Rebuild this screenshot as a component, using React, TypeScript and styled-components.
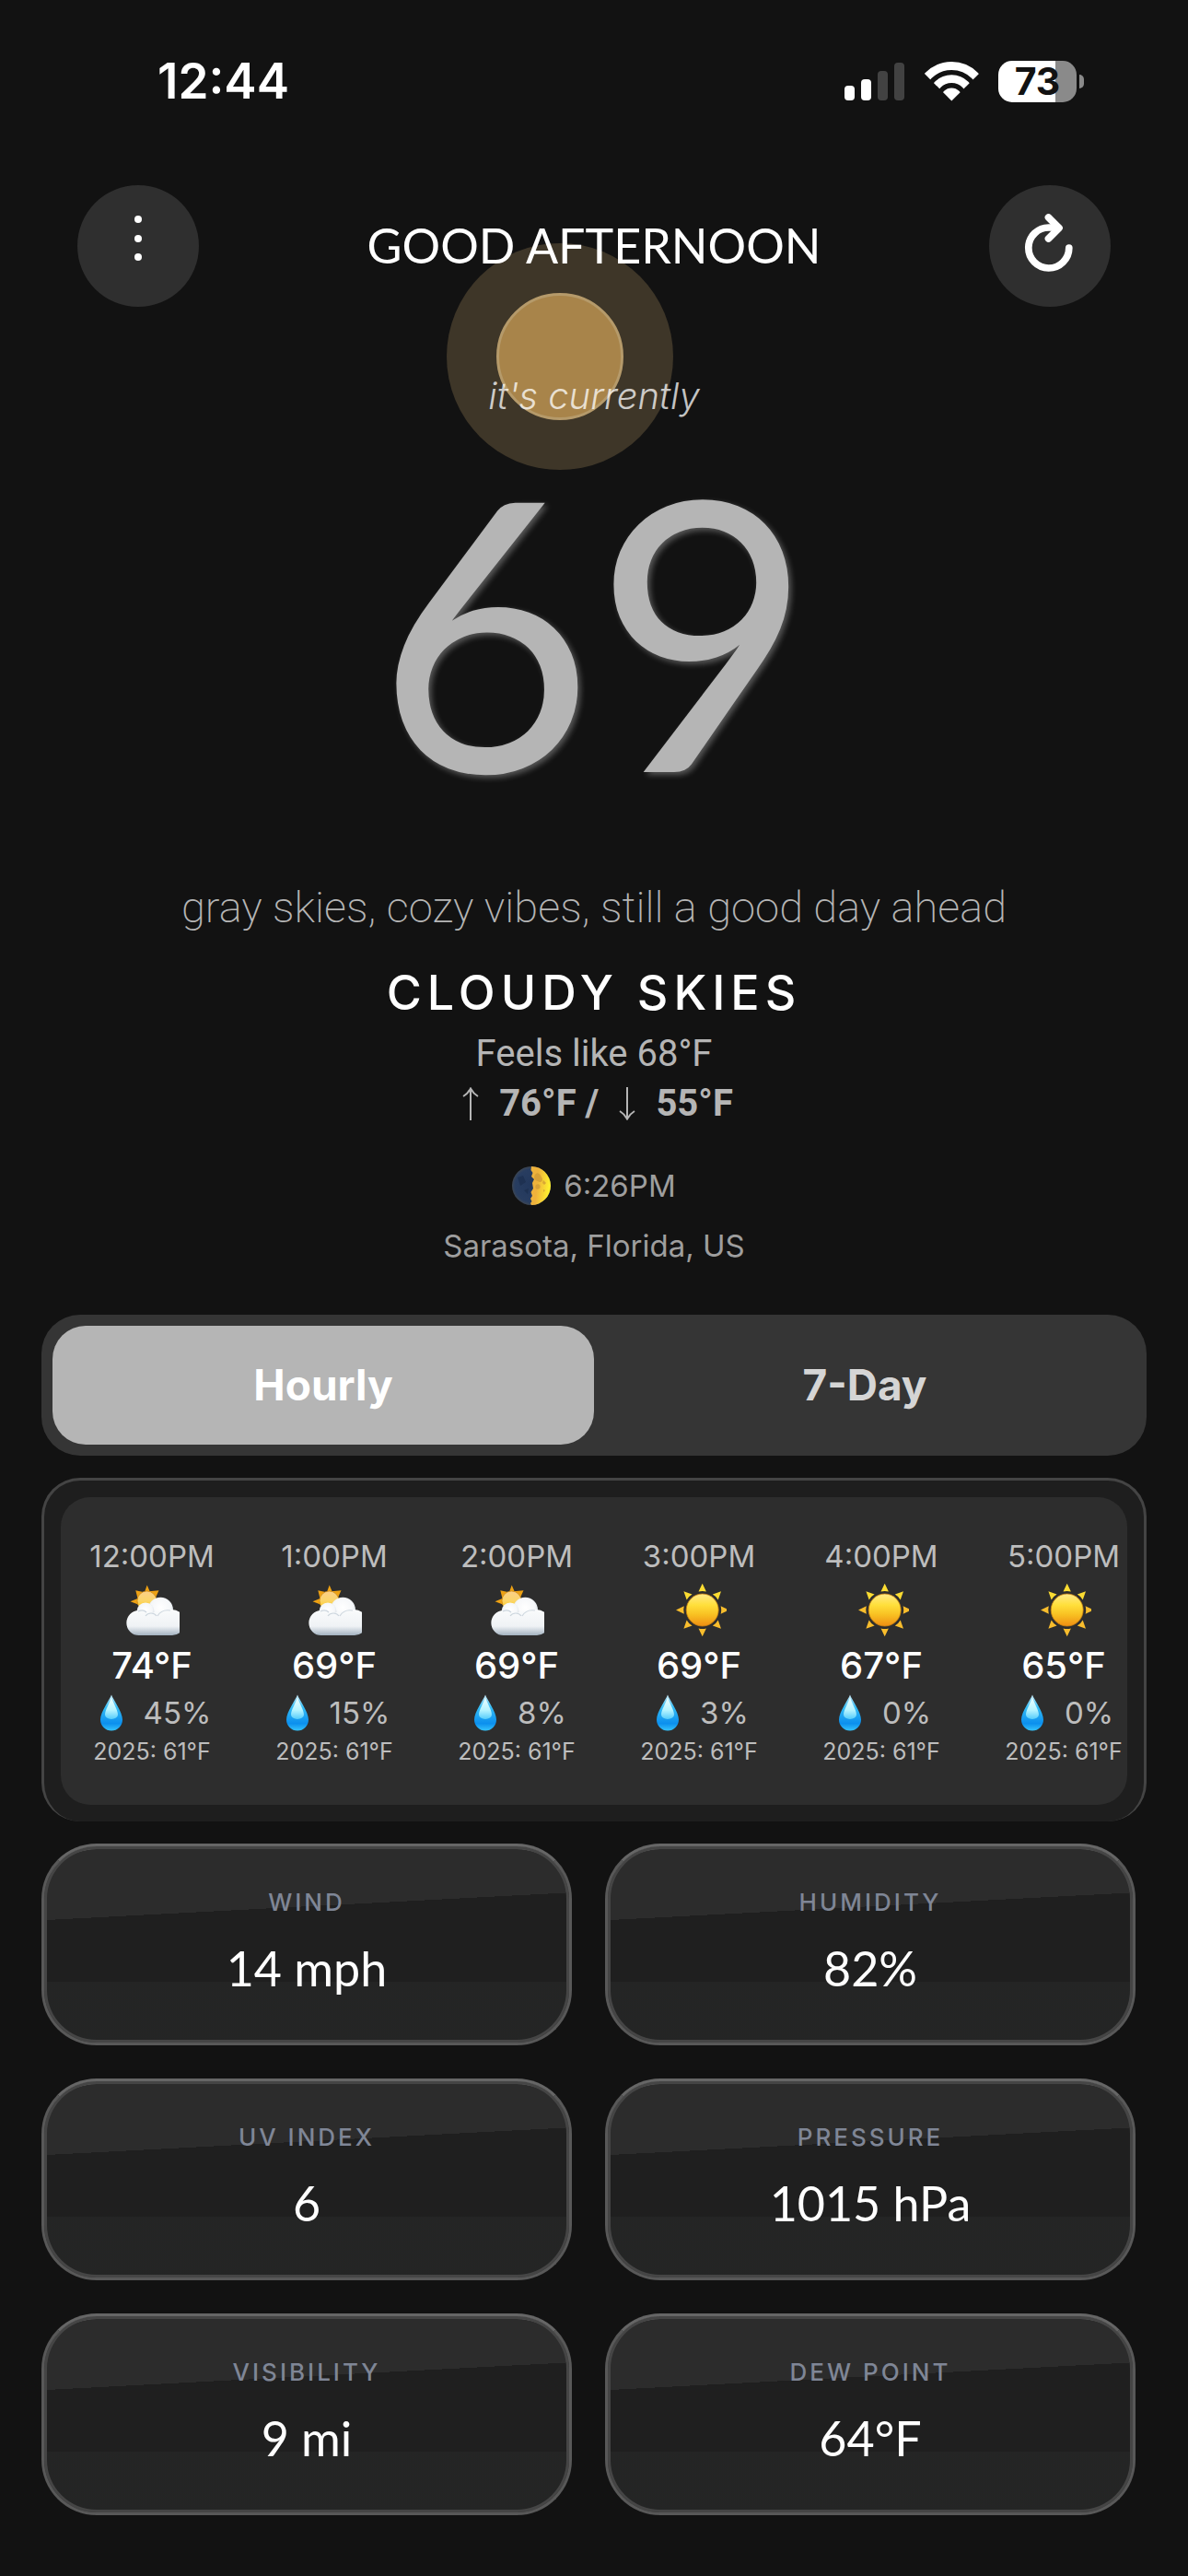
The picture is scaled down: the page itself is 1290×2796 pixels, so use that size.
import React, { useState } from "react";
import styled, { createGlobalStyle } from "styled-components";

const GlobalStyle = createGlobalStyle`
  *, *::before, *::after { box-sizing: border-box; }
  body { margin: 0; background: #121212; }
  h1, h2, h3, p, ul, dl, dt, dd { margin: 0; padding: 0; font-weight: inherit; }
`;

const sans = `Inter, "Noto Sans", sans-serif`;
const display = `Lato, "Open Sans", sans-serif`;
const roboto = `Roboto, "Noto Sans", sans-serif`;

const Page = styled.main`
  font-family: ${sans};
  color: #fff;
  background: #121212;
  padding-bottom: 66px;
`;

/* ---------- status bar ---------- */

const StatusBar = styled.div`
  display: flex;
  justify-content: space-between;
  align-items: center;
  padding: 56px 113px 0 171px;
`;

const Clock = styled.time`
  font-size: 53px;
  line-height: 64px;
  font-weight: 600;
`;

const StatusIcons = styled.div`
  display: flex;
  align-items: center;
  gap: 21px;
`;

const Battery = styled.div`
  display: flex;
  align-items: center;
  gap: 3px;
`;

const BatteryBody = styled.div<{ $level: number }>`
  width: 85px;
  border-radius: 15px;
  background: linear-gradient(90deg, #fff ${(p) => p.$level}%, #8a8a8a ${(p) => p.$level}%);
  color: #121212;
  font-size: 41px;
  line-height: 45px;
  font-weight: 700;
  text-align: center;
`;

const BatteryTip = styled.div`
  width: 5px;
  height: 15px;
  border-radius: 0 8px 8px 0;
  background: #8a8a8a;
`;

/* ---------- header ---------- */

const Header = styled.header`
  position: relative;
  display: flex;
  justify-content: space-between;
  align-items: center;
  margin-top: 81px;
  padding: 0 84px;
`;

const SunGlow = styled.div`
  position: absolute;
  top: 63px;
  left: calc(50% - 160px);
  display: grid;
  place-items: center;
  width: 246px;
  height: 246px;
  border-radius: 50%;
  background: #3e3628;
`;

const SunDisc = styled.div`
  width: 138px;
  height: 138px;
  border-radius: 50%;
  border: 3px solid #b59a6a;
  background: #a8844a;
`;

const RoundButton = styled.button`
  width: 132px;
  height: 132px;
  padding: 0;
  border: 0;
  border-radius: 50%;
  background: #2f2f2f;
  color: #fff;
  cursor: pointer;
`;

const Greeting = styled.h1`
  position: relative;
  padding-bottom: 3px;
  font-family: ${display};
  font-size: 52px;
  line-height: 64px;
`;

/* ---------- current conditions ---------- */

const Current = styled.section`
  position: relative;
  display: flex;
  flex-direction: column;
  align-items: center;
  margin-top: 69px;
  text-align: center;
`;

const Intro = styled.p`
  font-size: 40px;
  line-height: 56px;
  font-style: italic;
  font-weight: 300;
  color: rgba(255, 255, 255, 0.75);
`;

const Temperature = styled.p`
  margin-top: 18px;
  font-family: ${display};
  font-size: 408px;
  line-height: 408px;
  color: #b5b5b5;
  text-shadow: 3px 3px 6px rgba(255, 255, 255, 0.3);
`;

const Tagline = styled.p`
  margin-top: 71px;
  font-family: ${roboto};
  font-size: 47px;
  line-height: 60px;
  font-weight: 200;
  color: #b5b5b5;
`;

const Condition = styled.h2`
  margin-top: 31px;
  font-size: 52px;
  line-height: 64px;
  font-weight: 500;
  letter-spacing: 6px;
`;

const FeelsLike = styled.p`
  margin-top: 7px;
  font-family: ${roboto};
  font-size: 40px;
  line-height: 54px;
  color: #b5b5b5;
`;

const HighLow = styled.p`
  display: flex;
  align-items: center;
  gap: 14px;
  font-family: ${roboto};
  font-size: 40px;
  line-height: 54px;
  font-weight: 700;
  color: #b5b5b5;
`;

const MetaRow = styled.p<{ $space: number }>`
  display: flex;
  align-items: center;
  gap: 14px;
  margin-top: ${(p) => p.$space}px;
  font-size: 33px;
  line-height: 42px;
  color: #9e9e9e;
`;

/* ---------- tabs ---------- */

const Tabs = styled.div`
  display: grid;
  grid-template-columns: 1fr 1fr;
  margin: 54px 45px 0;
  padding: 12px;
  border-radius: 42px;
  background: #353535;
`;

const Tab = styled.button<{ $active: boolean }>`
  padding: 0;
  border: 0;
  border-radius: 36px;
  background: ${(p) => (p.$active ? "#b5b5b5" : "transparent")};
  color: ${(p) => (p.$active ? "#fff" : "#d5d5d5")};
  font-family: ${sans};
  font-size: 46px;
  line-height: 129px;
  font-weight: 700;
  cursor: pointer;
`;

/* ---------- hourly ---------- */

const Panel = styled.section`
  margin: 24px 45px 0;
  padding: 18px;
  border: 3px solid #444;
  border-bottom: 0 solid transparent;
  border-radius: 42px;
  background: #1e1e1e;
`;

const HourList = styled.ul`
  display: flex;
  padding: 43px 0;
  border-radius: 32px;
  background: #2d2d2d;
  overflow: hidden;
  list-style: none;
`;

const Hour = styled.li`
  flex: 0 0 198px;
  display: flex;
  flex-direction: column;
  align-items: center;
  gap: 7px;
  color: #bdbdbd;
`;

const HourTime = styled.span`
  font-size: 33px;
  line-height: 42px;
`;

const HourTemp = styled.span`
  color: #fff;
  font-size: 40px;
  line-height: 48px;
  font-weight: 500;
`;

const Rain = styled.span`
  display: flex;
  align-items: center;
  gap: 15px;
  font-size: 33px;
  line-height: 40px;
`;

const LastYear = styled.span`
  font-size: 25px;
  line-height: 30px;
`;

/* ---------- metric cards ---------- */

const Metrics = styled.dl`
  display: grid;
  grid-template-columns: 1fr 1fr;
  gap: 36px;
  margin: 24px 57px 0 45px;
`;

const Card = styled.div`
  padding: 45px 24px 49px;
  border: 3px solid #585858;
  border-top-color: #666;
  border-radius: 60px;
  background:
    linear-gradient(177deg, rgba(255, 255, 255, 0.06) 33%, transparent 33%),
    linear-gradient(180deg, transparent 69%, rgba(220, 255, 240, 0.028) 69%),
    #1f1f1f;
  box-shadow: inset 0 0 0 3px #454545, inset 0 6px 0 -3px #707070;
  text-align: center;
`;

const CardLabel = styled.dt`
  font-size: 26px;
  line-height: 32px;
  font-weight: 500;
  letter-spacing: 3px;
  color: #7f8696;
`;

const CardValue = styled.dd`
  margin-top: 23px;
  font-family: ${display};
  font-size: 52px;
  line-height: 64px;
`;

/* ---------- drawings ---------- */

const SignalIcon = () => (
  <svg width="65" height="41" viewBox="0 0 65 41" aria-hidden="true">
    <rect x="0" y="25" width="11" height="16" rx="4" fill="#fff" />
    <rect x="18" y="18" width="11" height="23" rx="4" fill="#fff" />
    <rect x="36" y="9" width="11" height="32" rx="4" fill="#424242" />
    <rect x="54" y="0" width="11" height="41" rx="4" fill="#424242" />
  </svg>
);

const WifiIcon = () => (
  <svg width="60" height="44" viewBox="0 0 60 44" aria-hidden="true">
    <clipPath id="wedge">
      <path d="M30.3 43.5L-13 0H74Z" />
    </clipPath>
    <g clipPath="url(#wedge)" fill="none" stroke="#fff">
      <circle cx="30.3" cy="41" r="35.5" strokeWidth="9" />
      <circle cx="30.3" cy="41" r="21.3" strokeWidth="8.8" />
      <circle cx="30.3" cy="41" r="11.5" fill="#fff" stroke="none" />
    </g>
  </svg>
);

const DotsIcon = () => (
  <svg width="132" height="132" viewBox="0 0 132 132" fill="currentColor" aria-hidden="true">
    <circle cx="66" cy="37" r="4" />
    <circle cx="66" cy="58" r="4" />
    <circle cx="66" cy="78" r="4" />
  </svg>
);

const RefreshIcon = () => (
  <svg
    width="132"
    height="132"
    viewBox="0 0 132 132"
    fill="none"
    stroke="currentColor"
    strokeWidth="7.7"
    strokeLinecap="round"
    strokeLinejoin="round"
    aria-hidden="true"
  >
    <path d="M86.8 68A22 22 0 1 1 65.3 46H75" />
    <path d="M64.5 35L76 46.5L64.5 58" />
  </svg>
);

const ArrowIcon = ({ up, label }: { up?: boolean; label: string }) => (
  <svg
    width="34"
    height="36"
    viewBox="0 0 34 36"
    fill="none"
    stroke="currentColor"
    strokeWidth="2"
    role="img"
    aria-label={label}
  >
    {up ? (
      <path d="M17 36V1.500M9 10Q14 7 17 1.500Q20 7 25 10" />
    ) : (
      <path d="M17 0V34.500M9 26Q14 29 17 34.500Q20 29 25 26" />
    )}
  </svg>
);

const MoonIcon = () => (
  <svg width="42" height="42" viewBox="0 0 42 42" aria-hidden="true">
    <defs>
      <linearGradient id="moonLit" x1="0" y1="0" x2="1" y2="0.2">
        <stop offset="0.4" stopColor="#eeb23c" />
        <stop offset="1" stopColor="#fff02e" />
      </linearGradient>
      <radialGradient id="moonDark">
        <stop offset="0" stopColor="#22375c" />
        <stop offset="0.85" stopColor="#283d60" />
        <stop offset="1" stopColor="#3c4654" />
      </radialGradient>
    </defs>
    <circle cx="21" cy="21" r="21" fill="url(#moonDark)" />
    <path
      d="M21 0A21 21 0 0 1 21 42L20 40L21.5 38L20 35L22 32L20.500 28L23 24L22 18L24 14L21 11L22.500 7L20.500 4Z"
      fill="url(#moonLit)"
    />
    <path
      d="M25 9C28 5 31 9 32 12C35 15 31 19 28 16C25 16 23 12 25 9ZM34 15L37 18L35 20L33 18ZM26 20C29 18 32 21 30 24C27 26 24 24 26 20ZM34 25L36 26L34 28Z"
      fill="#cf9a35"
      opacity="0.75"
    />
    <path d="M6 12L12 10L15 17L9 21ZM13 26L18 24L17 30Z" fill="#1b2d4d" opacity="0.7" />
  </svg>
);

const DropIcon = () => (
  <svg width="40" height="40" viewBox="0 0 40 40" aria-hidden="true">
    <defs>
      <linearGradient id="dropBody" x1="0" y1="0" x2="0" y2="1">
        <stop offset="0" stopColor="#c8e6f4" />
        <stop offset="0.35" stopColor="#35bdf5" />
        <stop offset="0.8" stopColor="#0b8fee" />
        <stop offset="1" stopColor="#35c4fb" />
      </linearGradient>
      <linearGradient id="dropShine" x1="0" y1="0" x2="0" y2="1">
        <stop offset="0" stopColor="#f2ffff" />
        <stop offset="0.6" stopColor="#b4f3ff" />
        <stop offset="1" stopColor="#54ccfb" />
      </linearGradient>
    </defs>
    <path d="M20 0.500C22 6 32 19 32 27.500A12 12 0 0 1 8 27.500C8 19 18 6 20 0.500Z" fill="url(#dropBody)" />
    <path d="M20 3C21.500 9 27 17 27 22A7 5 0 0 1 13 22C13 17 18.500 9 20 3Z" fill="url(#dropShine)" />
  </svg>
);

const SunIcon = () => (
  <svg width="60" height="60" viewBox="0 0 60 60" aria-hidden="true">
    <defs>
      <linearGradient id="sunFace" x1="0" y1="0" x2="0" y2="1">
        <stop offset="0" stopColor="#ffea8a" />
        <stop offset="0.35" stopColor="#ffdf3a" />
        <stop offset="0.65" stopColor="#f8c022" />
        <stop offset="1" stopColor="#ee8e12" />
      </linearGradient>
    </defs>
    {[0, 45, 90, 135, 180, 225, 270, 315].map((a) => (
      <path
        key={a}
        d="M33.700 1.800L37.900 10.600Q33.700 9.400 29.500 10.600Z"
        fill={a === 0 || a === 45 || a === 315 ? "#fbdc32" : "#f8bd2d"}
        transform={`rotate(${a} 33.700 30.500)`}
      />
    ))}
    <circle cx="33.7" cy="30.5" r="17.5" fill="url(#sunFace)" stroke="#c9820f" strokeWidth="0.8" />
  </svg>
);

const PartlyCloudyIcon = () => (
  <svg width="60" height="60" viewBox="0 0 60 60" aria-hidden="true">
    <defs>
      <linearGradient id="peekSun" x1="0" y1="0" x2="0" y2="1">
        <stop offset="0" stopColor="#fbd08a" />
        <stop offset="0.5" stopColor="#fbd568" />
        <stop offset="1" stopColor="#ffcb10" />
      </linearGradient>
      <radialGradient id="puff" cx="0.5" cy="0.4" r="0.6">
        <stop offset="0" stopColor="#ffffff" />
        <stop offset="0.65" stopColor="#f5f7f9" />
        <stop offset="1" stopColor="#ccd5dd" />
      </radialGradient>
      <linearGradient id="cloudBase" x1="0" y1="0" x2="0" y2="1">
        <stop offset="0" stopColor="#fafbfc" />
        <stop offset="0.65" stopColor="#eff2f5" />
        <stop offset="1" stopColor="#a3b2c0" />
      </linearGradient>
    </defs>
    <path
      d="M24.700 3.500L27.500 10H29.500L37.500 9.300L34 17L24 28L15 24.500L6.500 21.300L14.500 18L12.300 9.300L20.500 11H22Z"
      fill="#eda113"
    />
    <circle cx="24.5" cy="20.500" r="10.500" fill="url(#peekSun)" stroke="#c98514" strokeWidth="0.700" />
    <circle cx="39.300" cy="30.500" r="13.700" fill="url(#puff)" />
    <circle cx="23" cy="32" r="9.500" fill="url(#puff)" />
    <path
      d="M15.700 31C20 30 25 35 29 34C36 32 42 32 46 31Q49 30 51 30A14 14 0 0 1 52 58H16A13.500 13.500 0 0 1 15.700 31Z"
      fill="url(#cloudBase)"
    />
    <path
      d="M23 37C26 33 32 33 35 37M36 37C39 32 44 30 50 31M15 32C19 30 22 31 24 33"
      fill="none"
      stroke="#cdd6de"
      strokeWidth="1.200"
    />
  </svg>
);

/* ---------- data ---------- */

type Sky = "cloud" | "sun";

const hours: { time: string; sky: Sky; temp: number; rain: number }[] = [
  { time: "12:00PM", sky: "cloud", temp: 74, rain: 45 },
  { time: "1:00PM", sky: "cloud", temp: 69, rain: 15 },
  { time: "2:00PM", sky: "cloud", temp: 69, rain: 8 },
  { time: "3:00PM", sky: "sun", temp: 69, rain: 3 },
  { time: "4:00PM", sky: "sun", temp: 67, rain: 0 },
  { time: "5:00PM", sky: "sun", temp: 65, rain: 0 },
];

const metrics = [
  { label: "WIND", value: "14 mph" },
  { label: "HUMIDITY", value: "82%" },
  { label: "UV INDEX", value: "6" },
  { label: "PRESSURE", value: "1015 hPa" },
  { label: "VISIBILITY", value: "9 mi" },
  { label: "DEW POINT", value: "64°F" },
];

export default function App() {
  const [tab, setTab] = useState("Hourly");

  return (
    <Page>
      <GlobalStyle />
      <StatusBar>
        <Clock>12:44</Clock>
        <StatusIcons>
          <SignalIcon />
          <WifiIcon />
          <Battery>
            <BatteryBody $level={73}>73</BatteryBody>
            <BatteryTip />
          </Battery>
        </StatusIcons>
      </StatusBar>

      <Header>
        <SunGlow>
          <SunDisc />
        </SunGlow>
        <RoundButton type="button" aria-label="Menu">
          <DotsIcon />
        </RoundButton>
        <Greeting>GOOD AFTERNOON</Greeting>
        <RoundButton type="button" aria-label="Refresh">
          <RefreshIcon />
        </RoundButton>
      </Header>

      <Current>
        <Intro>it's currently</Intro>
        <Temperature>69</Temperature>
        <Tagline>gray skies, cozy vibes, still a good day ahead</Tagline>
        <Condition>CLOUDY SKIES</Condition>
        <FeelsLike>Feels like 68°F</FeelsLike>
        <HighLow>
          <ArrowIcon up label="High" />
          <span>76°F /</span>
          <ArrowIcon label="Low" />
          <span>55°F</span>
        </HighLow>
        <MetaRow $space={41}>
          <MoonIcon />
          <span>6:26PM</span>
        </MetaRow>
        <MetaRow $space={23}>Sarasota, Florida, US</MetaRow>
      </Current>

      <Tabs>
        {["Hourly", "7-Day"].map((name) => (
          <Tab
            key={name}
            type="button"
            $active={tab === name}
            aria-pressed={tab === name}
            onClick={() => setTab(name)}
          >
            {name}
          </Tab>
        ))}
      </Tabs>

      <Panel>
        <HourList>
          {hours.map((h) => (
            <Hour key={h.time}>
              <HourTime>{h.time}</HourTime>
              {h.sky === "sun" ? <SunIcon /> : <PartlyCloudyIcon />}
              <HourTemp>{h.temp}°F</HourTemp>
              <Rain>
                <DropIcon />
                {h.rain}%
              </Rain>
              <LastYear>2025: 61°F</LastYear>
            </Hour>
          ))}
        </HourList>
      </Panel>

      <Metrics>
        {metrics.map((m) => (
          <Card key={m.label}>
            <CardLabel>{m.label}</CardLabel>
            <CardValue>{m.value}</CardValue>
          </Card>
        ))}
      </Metrics>
    </Page>
  );
}
